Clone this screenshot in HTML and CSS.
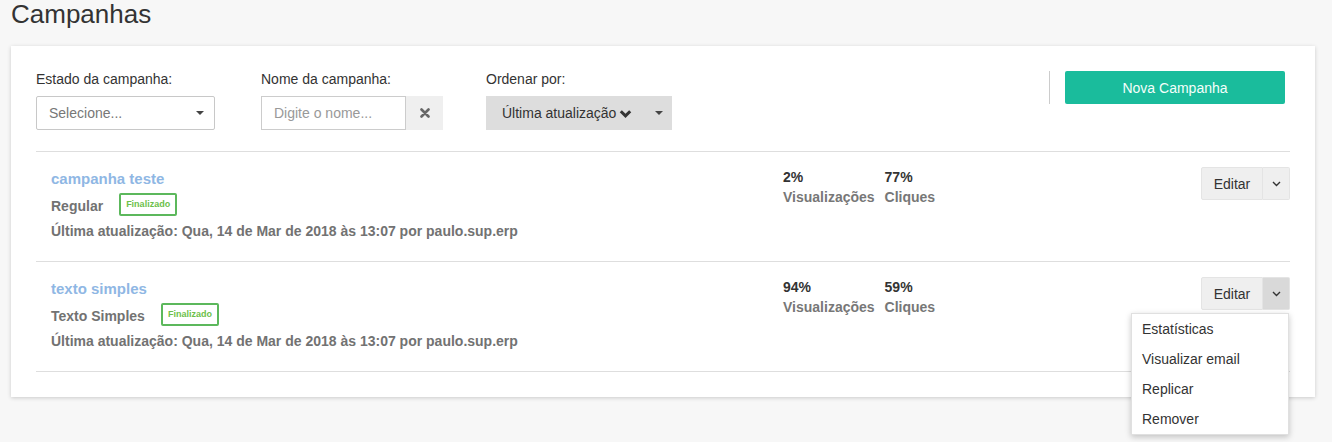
FILE: index.html
```html
<!DOCTYPE html>
<html lang="pt">
<head>
<meta charset="utf-8">
<title>Campanhas</title>
<link rel="stylesheet" href="styles.css">
</head>
<body>
<div class="page">
  <h1 class="page-title">Campanhas</h1>
  <div class="card">
    <div class="filters">
      <div class="filter-col">
        <label class="filter-label">Estado da campanha:</label>
        <div class="select">
          <span class="select-text">Selecione...</span>
          <span class="caret"></span>
        </div>
      </div>
      <div class="filter-col">
        <label class="filter-label">Nome da campanha:</label>
        <div class="input-group">
          <div class="text-input">Digite o nome...</div>
          <div class="clear-btn">
            <svg width="10" height="10" viewBox="0 0 10 10"><path d="M1.5 1.5 L8.5 8.5 M8.5 1.5 L1.5 8.5" stroke="#666" stroke-width="2.6" stroke-linecap="round"/></svg>
          </div>
        </div>
      </div>
      <div class="filter-col">
        <label class="filter-label">Ordenar por:</label>
        <div class="sort-btn">
          <span class="sort-text">Última atualização</span>
          <svg class="chev-bold" width="13" height="10" viewBox="0 0 13 10"><path d="M1.8 2.2 L6.5 6.9 L11.2 2.2" fill="none" stroke="#333" stroke-width="3"/></svg>
          <span class="caret sort-caret"></span>
        </div>
      </div>
      <div class="filter-actions">
        <div class="separator"></div>
        <button class="btn-new">Nova Campanha</button>
      </div>
    </div>

    <div class="list">
      <div class="item">
        <div class="info">
          <div class="item-title">campanha teste</div>
          <div class="item-type"><span>Regular</span><span class="badge">Finalizado</span></div>
          <div class="item-meta">Última atualização: Qua, 14 de Mar de 2018 às 13:07 por paulo.sup.erp</div>
        </div>
        <div class="stats">
          <div class="stat"><div class="stat-value">2%</div><div class="stat-label">Visualizações</div></div>
          <div class="stat"><div class="stat-value">77%</div><div class="stat-label">Cliques</div></div>
        </div>
        <div class="actions">
          <div class="btn-group">
            <button class="btn-edit">Editar</button>
            <button class="btn-toggle"><svg width="9" height="6" viewBox="0 0 9 6"><path d="M1 1 L4.5 4.5 L8 1" fill="none" stroke="#333" stroke-width="1.4"/></svg></button>
          </div>
        </div>
      </div>

      <div class="item">
        <div class="info">
          <div class="item-title">texto simples</div>
          <div class="item-type"><span>Texto Simples</span><span class="badge">Finalizado</span></div>
          <div class="item-meta">Última atualização: Qua, 14 de Mar de 2018 às 13:07 por paulo.sup.erp</div>
        </div>
        <div class="stats">
          <div class="stat"><div class="stat-value">94%</div><div class="stat-label">Visualizações</div></div>
          <div class="stat"><div class="stat-value">59%</div><div class="stat-label">Cliques</div></div>
        </div>
        <div class="actions">
          <div class="btn-group open">
            <button class="btn-edit">Editar</button>
            <button class="btn-toggle active"><svg width="9" height="6" viewBox="0 0 9 6"><path d="M1 1 L4.5 4.5 L8 1" fill="none" stroke="#333" stroke-width="1.4"/></svg></button>
            <ul class="dropdown-menu">
              <li>Estatísticas</li>
              <li>Visualizar email</li>
              <li>Replicar</li>
              <li>Remover</li>
            </ul>
          </div>
        </div>
      </div>
    </div>
  </div>
</div>
</body>
</html>
```

FILE: styles.css
```css
* { box-sizing: border-box; }
html, body {
  margin: 0;
  padding: 0;
  background: #f7f7f7;
  font-family: "Liberation Sans", Arial, sans-serif;
  font-size: 14px;
  color: #333;
}
body {
  min-height: 442px;
}
.page {
  padding: 0 17px 45px 11px;
}
.page-title {
  margin: 0;
  font-size: 26px;
  font-weight: normal;
  line-height: 28px;
  color: #333;
  height: 28px;
}
.card {
  margin-top: 18px;
  background: #fff;
  box-shadow: 0 1px 4px rgba(0,0,0,0.18);
  padding: 23px 25px 25px 25px;
}
.filters {
  display: flex;
  align-items: flex-start;
  padding-bottom: 21px;
}
.filter-col {
  width: 225px;
  display: flex;
  flex-direction: column;
}
.filter-label {
  display: block;
  line-height: 20px;
  height: 20px;
  margin-bottom: 7px;
  color: #333;
}
.select {
  width: 179px;
  height: 34px;
  border: 1px solid #c8c8c8;
  border-radius: 2px;
  display: flex;
  align-items: center;
  justify-content: space-between;
  padding: 0 10px 0 12px;
  color: #777;
}
.caret {
  width: 0;
  height: 0;
  border-left: 4px solid transparent;
  border-right: 4px solid transparent;
  border-top: 4px solid #444;
}
.input-group {
  display: flex;
  width: 182px;
  height: 34px;
}
.text-input {
  width: 145px;
  height: 34px;
  border: 1px solid #ccc;
  padding: 0 12px;
  line-height: 32px;
  color: #999;
}
.clear-btn {
  width: 37px;
  height: 34px;
  background: #efefef;
  display: flex;
  align-items: center;
  justify-content: center;
}
.sort-btn {
  width: 186px;
  height: 34px;
  background: #dddddd;
  display: flex;
  align-items: center;
  padding: 0 9px 0 16px;
  color: #333;
}
.sort-text {
  white-space: nowrap;
}
.chev-bold {
  margin-left: 3px;
  margin-top: 1px;
}
.sort-caret {
  margin-left: auto;
}
.filter-actions {
  margin-left: auto;
  display: flex;
  align-items: center;
  margin-top: 2px;
  margin-right: 5px;
}
.separator {
  width: 1px;
  height: 33px;
  background: #ccc;
  margin-right: 15px;
}
.btn-new {
  width: 220px;
  height: 33px;
  border: none;
  border-radius: 2px;
  background: #1abc9c;
  color: #f4fffb;
  font-family: inherit;
  font-size: 14px;
  padding: 0;
}
.list {
  border-top: 1px solid #dedede;
}
.item {
  display: flex;
  align-items: flex-start;
  padding: 15px 0 20px 15px;
  border-bottom: 1px solid #dedede;
}
.info {
  width: 732px;
}
.item-title {
  font-size: 15px;
  font-weight: bold;
  line-height: 24px;
  color: #8fb7e4;
}
.item-type {
  display: flex;
  align-items: center;
  height: 23px;
  margin-top: 2px;
  font-weight: bold;
  color: #727272;
}
.item-type > span:first-child {
  padding-top: 2px;
}
.badge {
  margin-left: 16px;
  height: 23px;
  padding: 0 5px;
  border: 2px solid #5cb85c;
  border-radius: 2px;
  font-size: 9px;
  line-height: 19px;
  font-weight: bold;
  color: #6cbf4a;
}
.item-meta {
  margin-top: 5px;
  line-height: 20px;
  font-weight: bold;
  color: #727272;
}
.stats {
  display: flex;
  gap: 10px;
}
.stat-value {
  line-height: 20px;
  font-weight: bold;
  color: #333;
}
.stat-label {
  line-height: 20px;
  font-weight: bold;
  color: #777;
}
.actions {
  margin-left: auto;
}
.btn-group {
  position: relative;
  display: flex;
}
.btn-edit {
  width: 62px;
  height: 33px;
  background: #efefef;
  border: 1px solid #e4e4e4;
  border-radius: 2px 0 0 2px;
  font-family: inherit;
  font-size: 14px;
  color: #333;
  padding: 0;
}
.btn-toggle {
  width: 27px;
  height: 33px;
  background: #efefef;
  border: 1px solid #e4e4e4;
  border-left: none;
  border-radius: 0 2px 2px 0;
  padding: 0;
  display: flex;
  align-items: center;
  justify-content: center;
}
.btn-toggle.active {
  background: #d9d9d9;
}
.dropdown-menu {
  position: absolute;
  top: 36px;
  right: 1px;
  width: 158px;
  margin: 0;
  padding: 0;
  list-style: none;
  background: #fff;
  border: 1px solid rgba(0,0,0,0.12);
  box-shadow: 0 2px 6px rgba(0,0,0,0.22);
  z-index: 10;
}
.dropdown-menu li {
  height: 30px;
  line-height: 30px;
  padding: 0 10px;
  color: #333;
  white-space: nowrap;
}
```
